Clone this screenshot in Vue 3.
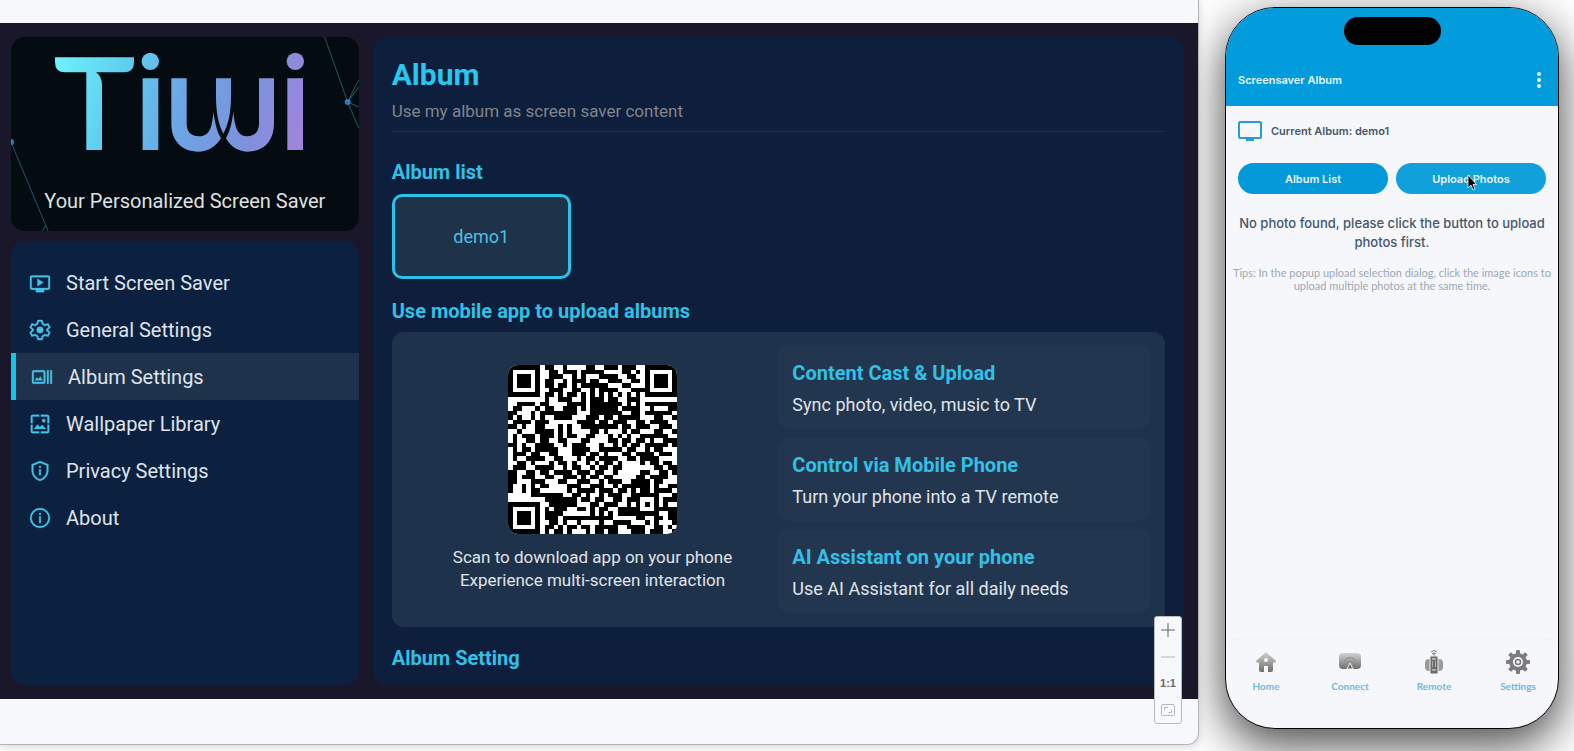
<template>
  <div class="page">
    <section class="screen-window">
      <div class="tv">
        <aside class="sidebar">
          <div class="brand">
            <svg class="brand-lines" viewBox="0 0 347 194" preserveAspectRatio="none" aria-hidden="true">
              <g fill="none" stroke="#24505f" stroke-width="1">
                <path d="M313 0L336 65L347 91M336 65L347 43M336 65L347 50M336 65L347 70" />
                <path d="M0 105L37 194M31 194L35 188" />
              </g>
              <circle cx="336" cy="65" r="3" fill="#2f7fb5" />
              <circle cx="0" cy="105" r="3" fill="#2f7fb5" />
            </svg>
            <svg class="logo" viewBox="165 98 747 300" role="img" aria-label="Tiwi">
              <defs>
                <linearGradient id="logoFill" x1="165" y1="140" x2="900" y2="370" gradientUnits="userSpaceOnUse">
                  <stop offset="0" stop-color="#6ff0fa" />
                  <stop offset="0.25" stop-color="#5fd0f0" />
                  <stop offset="0.5" stop-color="#6ba8e6" />
                  <stop offset="0.78" stop-color="#7c92dc" />
                  <stop offset="1" stop-color="#a184dc" />
                </linearGradient>
              </defs>
              <g fill="url(#logoFill)">
                <path d="M165 114H402V128Q402 159 372 159H288Q306 170 306 198V392H259V159H195Q165 159 165 128Z" />
                <circle cx="451" cy="126" r="26" />
                <path d="M428 177H475V392H428Z" />
                <path d="M514 177H560V315C560 338 575 351 597 351C628 351 637 325 640 277C645 310 650 335 663 357C645 385 622 397 595 397C545 397 514 365 514 312Z" />
                <path d="M648 177H693V230C693 280 685 315 670 343C655 315 648 280 648 230Z" />
                <path d="M822 177H777V315C777 338 762 351 742 351C713 351 704 325 700 277C696 310 690 335 678 357C693 385 718 397 743 397C792 397 822 365 822 312Z" />
                <circle cx="886" cy="126" r="26" />
                <path d="M862 177H909V392H862Z" />
              </g>
            </svg>
            <p class="tagline">Your Personalized Screen Saver</p>
          </div>

          <nav class="menu">
            <button
              v-for="item in menu"
              :key="item.label"
              type="button"
              class="menu-item"
              :class="{ active: item.label === current }"
              @click="current = item.label"
            >
              <svg class="menu-icon" viewBox="0 0 24 24" aria-hidden="true">
                <path :d="item.icon" fill-rule="evenodd" />
              </svg>
              <span>{{ item.label }}</span>
            </button>
          </nav>
        </aside>

        <main class="content">
          <header class="content-head">
            <h1>Album</h1>
            <p>Use my album as screen saver content</p>
          </header>

          <h2>Album list</h2>
          <button type="button" class="album">demo1</button>

          <h2>Use mobile app to upload albums</h2>
          <div class="upload">
            <div class="scan">
              <svg class="qr" viewBox="0 0 37 37" role="img" aria-label="QR code">
                <path d="M0 0H37V37H0Z" fill="#fff" />
                <path :d="qrPath" fill="#000" shape-rendering="crispEdges" />
              </svg>
              <p>Scan to download app on your phone<br />Experience multi-screen interaction</p>
            </div>
            <div class="features">
              <article v-for="f in features" :key="f.title" class="feature">
                <h3>{{ f.title }}</h3>
                <p>{{ f.text }}</p>
              </article>
            </div>
          </div>

          <h2>Album Setting</h2>
        </main>
      </div>

      <div class="zoom-bar">
        <button type="button" aria-label="Zoom in">
          <svg viewBox="0 0 14 14"><path d="M7 0V14M0 7H14" stroke="#5c6270" /></svg>
        </button>
        <button type="button" aria-label="Zoom out">
          <svg viewBox="0 0 14 14"><path d="M0 7H14" stroke="#b4b7be" /></svg>
        </button>
        <button type="button" class="ratio">1:1</button>
        <button type="button" aria-label="Fit to window">
          <svg viewBox="0 0 14 14" fill="none" stroke="#b4b7be">
            <rect x="0.5" y="1.5" width="13" height="11" rx="1" />
            <path d="M3.5 7V4.500H7M7.500 9.500H10.500V7" />
          </svg>
        </button>
      </div>
    </section>

    <section class="phone-area">
      <div class="phone">
        <header class="phone-head">
          <div class="island"></div>
          <div class="phone-title">
            <h2>Screensaver Album</h2>
            <button type="button" class="more" aria-label="More"><i></i><i></i><i></i></button>
          </div>
        </header>

        <div class="phone-body">
          <div class="current-album">
            <svg viewBox="0 0 24 20" aria-hidden="true">
              <rect x="1" y="1" width="22" height="16" rx="1" fill="none" stroke="#2b9bd6" stroke-width="2" />
              <path d="M8 17H16V20H8Z" fill="#2b9bd6" />
            </svg>
            <span>Current Album: demo1</span>
          </div>
          <div class="actions">
            <button type="button">Album List</button>
            <button type="button" class="hovered">
              Upload Photos
              <svg class="cursor" viewBox="0 0 10 17" aria-hidden="true">
                <path d="M1 1V14L4 11L6 16L8 15L6 10.500H9.500Z" fill="#000" stroke="#fff" stroke-width="0.8" />
              </svg>
            </button>
          </div>
          <p class="empty">No photo found, please click the button to upload photos first.</p>
          <p class="tips">Tips: In the popup upload selection dialog, click the image icons to upload multiple photos at the same time.</p>
        </div>

        <nav class="tabs">
          <svg class="defs" aria-hidden="true">
            <linearGradient id="tabFill" x1="0" y1="0" x2="0" y2="1">
              <stop offset="0" stop-color="#d2d2d0" />
              <stop offset="1" stop-color="#6e6e6e" />
            </linearGradient>
          </svg>
          <a href="#home">
            <svg viewBox="0 0 24 24">
              <path fill="url(#tabFill)" fill-rule="evenodd" d="M12 2L2 11Q2 12.500 4 12.500H5V20Q5 22 7 22H10V16H14V22H17Q19 22 19 20V12.500H20Q22 12.500 22 11ZM12 8A2 2 0 1 1 12 12A2 2 0 1 1 12 8Z" />
            </svg>
            <span>Home</span>
          </a>
          <a href="#connect">
            <svg viewBox="0 0 24 24">
              <rect x="1" y="3" width="22" height="16" rx="4" fill="url(#tabFill)" />
              <path d="M6 11Q12 4 18 11M8 13Q12 9 16 13" fill="none" stroke="#8a8a8a" />
              <path d="M12 13L15 19H9Z" fill="#666" stroke="#eee" />
            </svg>
            <span>Connect</span>
          </a>
          <a href="#remote">
            <svg viewBox="0 0 24 24">
              <rect x="3" y="9" width="18" height="12" rx="4" fill="#9a9a9a" />
              <path d="M9 2Q12 -1 15 2M10 4Q12 2 14 4M12 3V7" fill="none" stroke="#777" />
              <rect x="8" y="6" width="8" height="18" rx="1" fill="#6c6c6c" stroke="#ededed" />
              <path d="M10 9H14M10 12H11M13 12H14M10 14H11M13 14H14M10 16H11M13 16H14M10 20H14" stroke="#eee" />
            </svg>
            <span>Remote</span>
          </a>
          <a href="#settings">
            <svg viewBox="0 0 24 24">
              <g fill="#7c7c7c">
                <circle cx="12" cy="12" r="9" />
                <rect v-for="a in [0, 45, 90, 135]" :key="a" x="10" y="0" width="4" height="24" rx="1" :transform="`rotate(${a} 12 12)`" />
              </g>
              <circle cx="12" cy="12" r="5" fill="#f5f7fb" />
              <circle cx="12" cy="12" r="2.500" fill="none" stroke="#777" stroke-width="1.500" />
            </svg>
            <span>Settings</span>
          </a>
        </nav>
      </div>
    </section>
  </div>
</template>

<script setup>
import { ref } from 'vue';

const current = ref('Album Settings');

const menu = [
  {
    label: 'Start Screen Saver',
    icon: 'M2 3H22Q24 3 24 5V18Q24 20 22 20H17V23H7V20H2Q0 20 0 18V5Q0 3 2 3ZM2 5V18H22V5ZM9 7L16 11.500L9 16Z'
  },
  {
    label: 'General Settings',
    icon: 'M9 0H15L16 4L18 5L22 4L24.500 9L21.500 12L24.500 15L22 20L18 19L16 20L15 24H9L8 20L6 19L2 20L-.5 15L2.500 12L-.5 9L2 4L6 5L8 4ZM10.500 2L9.700 5.200L6.300 7.200L3 6.200L1.800 8.600L4.500 11V13L1.800 15.400L3 17.800L6.300 16.800L9.700 18.800L10.500 22H13.500L14.300 18.800L17.700 16.800L21 17.800L22.200 15.400L19.500 13V11L22.200 8.600L21 6.200L17.700 7.200L14.300 5.200L13.500 2ZM12 8A4 4 0 1 1 12 16A4 4 0 1 1 12 8Z'
  },
  {
    label: 'Album Settings',
    icon: 'M2 4H14Q16 4 16 6V18Q16 20 14 20H2Q0 20 0 18V6Q0 4 2 4ZM2 6V18H14V6ZM3.500 16L6 12.500L8 14.500L10 11.500L12.500 16ZM18 4H20V20H18ZM22 4H24V20H22Z'
  },
  {
    label: 'Wallpaper Library',
    icon: 'M1 3Q1 1 3 1H11V3H3V11H1ZM13 1H21Q23 1 23 3V11H21V3H13ZM1 13H3V21H11V23H3Q1 23 1 21ZM21 13H23V21Q23 23 21 23H13V21H21ZM5 18L9 12.500L12 16L14.500 13L19 18ZM16.500 6A2 2 0 1 1 16.500 10A2 2 0 1 1 16.500 6Z'
  },
  {
    label: 'Privacy Settings',
    icon: 'M12 0L22 4V11C22 17.500 18 22 12 24C6 22 2 17.500 2 11V4ZM12 2.200L4 5.400V11C4 16.500 7.500 20.200 12 21.900C16.500 20.200 20 16.500 20 11V5.400ZM11 6H13V8H11ZM11 10H13V17H11Z'
  },
  {
    label: 'About',
    icon: 'M12 0A12 12 0 1 1 12 24A12 12 0 1 1 12 0ZM12 2A10 10 0 1 0 12 22A10 10 0 1 0 12 2ZM11 6H13V8H11ZM11 10H13V18H11Z'
  }
];

const features = [
  { title: 'Content Cast & Upload', text: 'Sync photo, video, music to TV' },
  { title: 'Control via Mobile Phone', text: 'Turn your phone into a TV remote' },
  { title: 'AI Assistant on your phone', text: 'Use AI Assistant for all daily needs' }
];

const qrRows = [
  '1111111011001000011001110111001111111',
  '1000001001101110111110000110101000001',
  '1011101001110010100011110011001011101',
  '1011101011001011101100111001101011101',
  '1011101011011010111111000110001011101',
  '1000001001110011001011110001111000001',
  '1111111011010110101010101010101111111',
  '0000000010011100101110110011100000000',
  '0011110110000111101111111010101111111',
  '0110001011001110101111110111100100011',
  '1100010111111110001111111001101111110',
  '1010010100111100011101101111100011001',
  '0111101110000001111011011100110111100',
  '1101001100010100111111110110111001110',
  '0010001111010100001101000101100011001',
  '0101110111010110011000101010011111100',
  '0100110110011000110000110110110100111',
  '1101001111001011100010010101101111101',
  '0101101111100011110011111011001011000',
  '0111011001100011101101000110111101110',
  '0100111100110001011011110011011110000',
  '0011010001011010010101101000010110110',
  '0111001111001011001011011000000011011',
  '1100110110111101110110010000011001101',
  '1101110011001110101101100000110111100',
  '1100011100011001110010111001111011000',
  '1001010110000111001110010111111010011',
  '1001011000000101111011101101011011110',
  '0000011111110011010010111001111110001',
  '0000000011111110110110011011100010111',
  '1111111001111110001101110010101010100',
  '1000001010111001101011001111100011111',
  '1011101011110000001010101111111110011',
  '1011101011101111111111100000110011011',
  '1011101001101001000010011110001010001',
  '1000001011010110110111110011110011010',
  '1111111010110100010110110001110111001'
];

const qrPath = qrRows
  .map((row, y) => [...row].map((c, x) => (c === '1' ? `M${x} ${y}h1v1h-1z` : '')).join(''))
  .join('');
</script>

<style>
body {
  margin: 0;
  background: #fff;
}
</style>

<style scoped>
.page {
  display: grid;
  grid-template-columns: minmax(0, 1fr) 375px;
  min-height: 100vh;
  overflow: hidden;
  background: #fdfdfd;
  font-family: Roboto, "Liberation Sans", sans-serif;
}

h1,
h2,
h3,
p {
  margin: 0;
}

button {
  padding: 0;
  border: 0;
  background: none;
  font: inherit;
  color: inherit;
  cursor: pointer;
}

.screen-window {
  position: relative;
  z-index: 1;
  display: flex;
  flex-direction: column;
  margin-bottom: 6px;
  padding: 23px 0 45px;
  box-sizing: border-box;
  background: #f7f8fc;
  border-right: 1px solid #b5b5b9;
  border-bottom: 1px solid #b5b5b9;
  border-bottom-right-radius: 12px;
  box-shadow: 0 2px 8px rgba(0, 0, 0, 0.15);
}

.tv {
  flex: 1;
  display: grid;
  grid-template-columns: 3fr 7fr;
  gap: 14px;
  padding: 14px 14px 14px 11px;
  background: #1a172a;
}

.sidebar {
  display: flex;
  flex-direction: column;
  gap: 10px;
}

.brand {
  position: relative;
  height: 194px;
  padding-top: 15px;
  box-sizing: border-box;
  border-radius: 14px;
  overflow: hidden;
  background: #040c12;
}

.brand-lines {
  position: absolute;
  inset: 0;
  width: 100%;
  height: 100%;
}

.logo {
  display: block;
  width: 249px;
  height: 100px;
  margin-left: 44px;
}

.tagline {
  margin-top: 37px;
  font-size: 20px;
  line-height: 24px;
  text-align: center;
  color: #dfe1e1;
}

.menu {
  flex: 1;
  display: flex;
  flex-direction: column;
  padding: 18px 0;
  border-radius: 14px;
  background: #0c2140;
}

.menu-item {
  display: flex;
  align-items: center;
  gap: 16px;
  height: 47px;
  padding-left: 19px;
  font-size: 20px;
  color: #dfe3ea;
}

.menu-item.active {
  padding-left: 16px;
  border-left: 5px solid #12c4ea;
  background: #1e324b;
}

.menu-icon {
  width: 20px;
  height: 20px;
  fill: #45c1e5;
  stroke: #45c1e5;
  stroke-width: 0.4;
  overflow: visible;
}

.content {
  padding: 18px 19px 14px;
  border-radius: 14px;
  background: #0e1f3d;
  color: #e0e3e8;
}

.content-head {
  padding-bottom: 9px;
  border-bottom: 1px solid #1b3049;
}

h1 {
  font-size: 30px;
  line-height: 40px;
  font-weight: 700;
  color: #27c8ee;
}

.content-head p {
  margin-top: 5px;
  font-size: 17px;
  line-height: 22px;
  color: #80848c;
}

.content h2 {
  font-size: 20px;
  line-height: 24px;
  font-weight: 700;
  color: #32c0e7;
}

.content-head + h2 {
  margin-top: 28px;
}

.album {
  display: block;
  width: 179px;
  height: 85px;
  margin: 10px 0 20px;
  box-sizing: border-box;
  border: 3px solid #2cc2e8;
  border-radius: 10px;
  background: #1e334a;
  font-size: 18px;
  color: #50bfe0;
}

.upload {
  display: grid;
  grid-template-columns: 1fr 1fr;
  margin: 9px 0 19px;
  padding: 14px 15px;
  border-radius: 12px;
  background: #1e334b;
}

.scan {
  display: flex;
  flex-direction: column;
  align-items: center;
  padding-top: 19px;
  font-size: 17px;
  line-height: 23px;
  text-align: center;
}

.qr {
  width: 169px;
  height: 169px;
  margin-bottom: 12px;
  border-radius: 10px;
}

.features {
  display: flex;
  flex-direction: column;
  gap: 9px;
}

.feature {
  padding: 15px 14px 12px;
  border-radius: 12px;
  background: #22374f;
}

.feature h3 {
  font-size: 20px;
  line-height: 24px;
  font-weight: 700;
  color: #32c0e7;
}

.feature p {
  margin-top: 8px;
  font-size: 18px;
  line-height: 24px;
}

.zoom-bar {
  position: absolute;
  right: 16px;
  bottom: 20px;
  display: flex;
  flex-direction: column;
  width: 28px;
  height: 108px;
  box-sizing: border-box;
  border: 1px solid #b9bbc1;
  border-radius: 3px;
  background: #f7f8fb;
}

.zoom-bar button {
  flex: 1;
  display: flex;
  align-items: center;
  justify-content: center;
}

.zoom-bar svg {
  width: 14px;
  height: 14px;
}

.zoom-bar .ratio {
  font: 700 11px "Liberation Sans", sans-serif;
  color: #666b75;
}

.phone-area {
  display: flex;
  padding: 7px 15px 22px 26px;
}

.phone {
  flex: 1;
  display: flex;
  flex-direction: column;
  box-sizing: border-box;
  border: 1px solid #050505;
  border-radius: 50px;
  overflow: hidden;
  background: #f5f7fb;
  box-shadow: 0 14px 40px rgba(0, 0, 0, 0.6), 0 20px 60px rgba(0, 0, 0, 0.2);
  font-family: Inter, "Liberation Sans", sans-serif;
}

.phone-head {
  padding: 9px 12px 12px;
  background: #029bdb;
  color: #e6f5fc;
}

.island {
  width: 97px;
  height: 28px;
  margin: 0 auto;
  border-radius: 14px;
  background: #000;
}

.phone-title {
  display: flex;
  align-items: center;
  justify-content: space-between;
  height: 49px;
  padding-top: 20px;
  box-sizing: border-box;
}

.phone-title h2 {
  font-size: 11px;
  line-height: 16px;
  font-weight: 600;
}

.more {
  display: flex;
  flex-direction: column;
  align-items: center;
  gap: 2px;
  width: 14px;
}

.more i {
  width: 4px;
  height: 4px;
  border-radius: 2px;
  background: #e6f5fc;
}

.phone-body {
  flex: 1;
  padding: 15px 12px;
  color: #46566a;
  text-align: center;
}

.current-album {
  display: flex;
  align-items: center;
  gap: 9px;
  font-size: 11px;
  line-height: 20px;
  font-weight: 600;
}

.current-album svg {
  width: 24px;
  height: 20px;
}

.actions {
  display: grid;
  grid-template-columns: 1fr 1fr;
  gap: 8px;
  margin-top: 22px;
}

.actions button {
  height: 31px;
  border-radius: 16px;
  background: #049ad9;
  color: #e6f5fc;
  font-size: 11px;
  font-weight: 600;
}

.actions .hovered {
  position: relative;
  background: #12a0db;
}

.cursor {
  position: absolute;
  top: 11px;
  left: 71px;
  width: 10px;
  height: 17px;
}

.empty {
  margin-top: 20px;
  font-size: 13px;
  line-height: 19px;
  font-weight: 500;
}

.tips {
  margin: 14px -6px 0;
  font-family: Lato, "Liberation Sans", sans-serif;
  font-size: 11px;
  line-height: 13px;
  color: #9da8b2;
}

.tabs {
  display: flex;
  height: 90px;
  margin: 0 -2px;
  padding-top: 11px;
  box-sizing: border-box;
  border-top: 1px solid #eff1f4;
  border-radius: 14px 14px 0 0;
}

.tabs a {
  display: flex;
  flex: 1;
  flex-direction: column;
  align-items: center;
  gap: 5px;
  font-family: Lato, "Liberation Sans", sans-serif;
  font-size: 10px;
  line-height: 14px;
  font-weight: 700;
  color: #6fb8e3;
  text-decoration: none;
}

.tabs a svg {
  width: 24px;
  height: 24px;
}

.defs {
  position: absolute;
  width: 0;
  height: 0;
}
</style>
